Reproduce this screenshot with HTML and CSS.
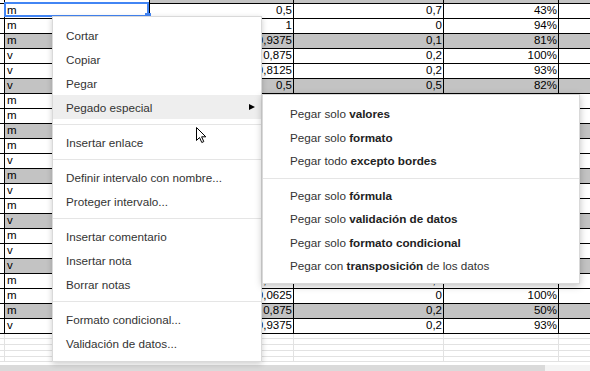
FILE: index.html
```html
<!DOCTYPE html>
<html lang="es">
<head>
    <meta charset="UTF-8">
    <meta name="viewport" content="width=device-width, initial-scale=1.0">
    <title>Hoja de cálculo - menú contextual</title>
    <link rel="stylesheet" href="styles.css">
</head>
<body>
    <div class="sheet">
        <div class="row top"><div></div><div class="plain"></div><div></div><div></div><div></div><div></div></div>

        <div class="row"><div></div><div class="txt selected">m<span class="sel-box"><span class="sel-handle"></span></span></div><div class="num">0,5</div><div class="num">0,7</div><div class="num">43%</div><div></div></div>
        <div class="row"><div></div><div class="txt">m</div><div class="num">1</div><div class="num">0</div><div class="num">94%</div><div></div></div>
        <div class="row gray"><div></div><div class="txt">m</div><div class="num">0,9375</div><div class="num">0,1</div><div class="num">81%</div><div></div></div>
        <div class="row"><div></div><div class="txt">v</div><div class="num">0,875</div><div class="num">0,2</div><div class="num">100%</div><div></div></div>
        <div class="row"><div></div><div class="txt">v</div><div class="num">0,8125</div><div class="num">0,2</div><div class="num">93%</div><div></div></div>
        <div class="row gray"><div></div><div class="txt">v</div><div class="num">0,5</div><div class="num">0,5</div><div class="num">82%</div><div></div></div>
        <div class="row"><div></div><div class="txt">m</div><div class="num">0,75</div><div class="num">0,3</div><div class="num">70%</div><div></div></div>
        <div class="row"><div></div><div class="txt">m</div><div class="num">0,625</div><div class="num">0,2</div><div class="num">75%</div><div></div></div>
        <div class="row gray"><div></div><div class="txt">m</div><div class="num">1</div><div class="num">0</div><div class="num">100%</div><div></div></div>
        <div class="row"><div></div><div class="txt">m</div><div class="num">0,5</div><div class="num">0,4</div><div class="num">56%</div><div></div></div>
        <div class="row"><div></div><div class="txt">v</div><div class="num">0,875</div><div class="num">0,1</div><div class="num">88%</div><div></div></div>
        <div class="row gray"><div></div><div class="txt">m</div><div class="num">0,6875</div><div class="num">0,3</div><div class="num">69%</div><div></div></div>
        <div class="row"><div></div><div class="txt">v</div><div class="num">0,9375</div><div class="num">0</div><div class="num">94%</div><div></div></div>
        <div class="row"><div></div><div class="txt">m</div><div class="num">0,8125</div><div class="num">0,2</div><div class="num">81%</div><div></div></div>
        <div class="row gray"><div></div><div class="txt">v</div><div class="num">0,75</div><div class="num">0,2</div><div class="num">75%</div><div></div></div>
        <div class="row"><div></div><div class="txt">m</div><div class="num">0,5625</div><div class="num">0,3</div><div class="num">63%</div><div></div></div>
        <div class="row"><div></div><div class="txt">v</div><div class="num">1</div><div class="num">0,1</div><div class="num">100%</div><div></div></div>
        <div class="row gray"><div></div><div class="txt">v</div><div class="num">0,875</div><div class="num">0,2</div><div class="num">88%</div><div></div></div>
        <div class="row"><div></div><div class="txt">m</div><div class="num">0,9375</div><div class="num">0,2</div><div class="num">93%</div><div></div></div>
        <div class="row"><div></div><div class="txt">m</div><div class="num">0,0625</div><div class="num">0</div><div class="num">100%</div><div></div></div>
        <div class="row gray"><div></div><div class="txt">m</div><div class="num">0,875</div><div class="num">0,2</div><div class="num">50%</div><div></div></div>
        <div class="row"><div></div><div class="txt">v</div><div class="num">0,9375</div><div class="num">0,2</div><div class="num">93%</div><div></div></div>

        <div class="row empty short"><div></div><div></div><div></div><div></div><div></div><div></div></div>
        <div class="row empty"><div></div><div></div><div></div><div></div><div></div><div></div></div>
        <div class="row empty"><div></div><div></div><div></div><div></div><div></div><div></div></div>
        <div class="row empty"><div></div><div></div><div></div><div></div><div></div><div></div></div>
        <div class="row empty short"><div></div><div></div><div></div><div></div><div></div><div></div></div>

        <div class="hscroll"><div class="thumb"></div></div>
    </div>

    <!-- menú contextual -->
    <div class="menu">
        <div class="item">Cortar</div>
        <div class="item">Copiar</div>
        <div class="item">Pegar</div>
        <div class="item active">Pegado especial<span class="arrow"></span></div>
        <div class="sep"></div>
        <div class="item">Insertar enlace</div>
        <div class="sep"></div>
        <div class="item">Definir intervalo con nombre...</div>
        <div class="item">Proteger intervalo...</div>
        <div class="sep"></div>
        <div class="item">Insertar comentario</div>
        <div class="item">Insertar nota</div>
        <div class="item">Borrar notas</div>
        <div class="sep"></div>
        <div class="item">Formato condicional...</div>
        <div class="item">Validación de datos...</div>
    </div>

    <div class="menu submenu">
        <div class="item">Pegar solo <b>valores</b></div>
        <div class="item">Pegar solo <b>formato</b></div>
        <div class="item">Pegar todo <b>excepto bordes</b></div>
        <div class="sep"></div>
        <div class="item">Pegar solo <b>fórmula</b></div>
        <div class="item">Pegar solo <b>validación de datos</b></div>
        <div class="item">Pegar solo <b>formato condicional</b></div>
        <div class="item">Pegar con <b>transposición</b> de los datos</div>
    </div>

    <svg class="cursor" width="12" height="18" viewBox="0 0 12 18">
        <path d="M1.5 1.5 L1.5 14.5 L4.5 11.5 L6.8 16.5 L8.8 15.6 L6.6 10.8 L10.8 10.8 Z" fill="#fff" stroke="#000" stroke-width="1" stroke-linejoin="round"/>
    </svg>
</body>
</html>
```

FILE: styles.css
```css
body {
    margin: 0;
    height: 371px;
    overflow: hidden;
    position: relative;
    background: #fff;
    font-family: "Liberation Sans", Arial, sans-serif;
}
.sheet {
    font-size: 11.5px;
    color: #000;
}
.row {
    display: grid;
    grid-template-columns: 5px 145px 144px 150px 115px 1fr;
    height: 15px;
}
.row > div {
    box-sizing: border-box;
    border-right: 1px solid #000;
    border-bottom: 1px solid #000;
    line-height: 12px;
    white-space: nowrap;
    overflow: hidden;
}
.row > div:last-child {
    border-right: none;
}
.row.top {
    height: 4px;
}
.row.top > div {
    background: #c3c3c3;
}
.row.top > div:first-child,
.row.top > .plain {
    background: #fff;
}
.row.gray > div {
    background: #c3c3c3;
}
.row.gray > div:first-child {
    background: #fff;
}
.txt {
    padding-left: 2px;
}
.num {
    text-align: right;
    padding-right: 1px;
}
.selected {
    position: relative;
    overflow: visible !important;
}
.sel-box {
    position: absolute;
    left: -1px;
    right: 0;
    top: -2px;
    bottom: 1px;
    border: 2px solid #4285f4;
}
.sel-handle {
    position: absolute;
    right: -4px;
    bottom: -4px;
    width: 6px;
    height: 6px;
    background: #4285f4;
}
.row.empty {
    height: 6px;
}
.row.empty.short {
    height: 5px;
}
.row.empty > div {
    border-color: #e2e2e2;
}
.hscroll {
    margin-top: 3px;
    height: 6px;
    background: #f4f4f4;
}
.thumb {
    width: 545px;
    height: 100%;
    background: #dadada;
}

.menu {
    position: absolute;
    left: 52px;
    top: 16px;
    width: 210px;
    box-sizing: border-box;
    padding: 6px 0;
    background: #fff;
    border: 1px solid rgba(0,0,0,0.15);
    box-shadow: 0 2px 6px rgba(0,0,0,0.2);
    font-size: 11.7px;
    color: #333;
    z-index: 2;
}
.item {
    display: flex;
    align-items: center;
    height: 24px;
    padding-left: 13px;
    white-space: nowrap;
}
.item.active {
    background: #eee;
}
.arrow {
    margin-left: auto;
    margin-right: 6px;
    width: 0;
    height: 0;
    border-left: 6px solid #000;
    border-top: 3.5px solid transparent;
    border-bottom: 3.5px solid transparent;
}
.sep {
    border-top: 1px solid #e5e5e5;
    margin: 5px 0;
}
.submenu {
    left: 262px;
    top: 94px;
    width: 318px;
    padding: 7px 0 5px;
    z-index: 3;
    box-shadow: 0 2px 7px rgba(0,0,0,0.25);
}
.submenu .item {
    display: block;
    height: 23.5px;
    line-height: 23.5px;
    padding-left: 27px;
}
.submenu b {
    color: #222;
}
.cursor {
    position: absolute;
    left: 195px;
    top: 126px;
    z-index: 4;
}
```
